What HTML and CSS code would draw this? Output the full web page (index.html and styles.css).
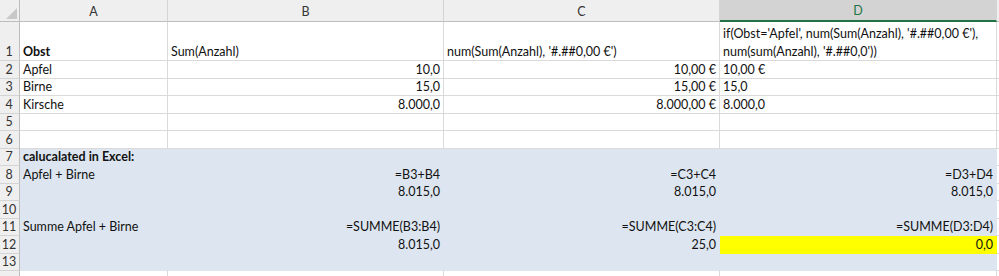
FILE: index.html
```html
<!DOCTYPE html>
<html lang="de">
<head>
<meta charset="utf-8">
<title>Sheet</title>
<link rel="stylesheet" href="styles.css">
</head>
<body>
<div class="sheet">
  <div class="corner"><span class="tri"></span></div>
  <div class="ch">A</div>
  <div class="ch">B</div>
  <div class="ch">C</div>
  <div class="ch sel">D</div>
  <div class="ch last"></div>

  <div class="rh r1">1</div>
  <div class="c r1 bold">Obst</div>
  <div class="c r1">Sum(Anzahl)</div>
  <div class="c r1">num(Sum(Anzahl), '#.##0,00 €')</div>
  <div class="c r1 wrap">if(Obst='Apfel', num(Sum(Anzahl), '#.##0,00 €'),<br>num(sum(Anzahl), '#.##0,0'))</div>
  <div class="c r1 last"></div>

  <div class="rh">2</div>
  <div class="c">Apfel</div>
  <div class="c num">10,0</div>
  <div class="c num">10,00 €</div>
  <div class="c">10,00 €</div>
  <div class="c last"></div>

  <div class="rh">3</div>
  <div class="c">Birne</div>
  <div class="c num">15,0</div>
  <div class="c num">15,00 €</div>
  <div class="c">15,0</div>
  <div class="c last"></div>

  <div class="rh">4</div>
  <div class="c">Kirsche</div>
  <div class="c num">8.000,0</div>
  <div class="c num">8.000,00 €</div>
  <div class="c">8.000,0</div>
  <div class="c last"></div>

  <div class="rh">5</div>
  <div class="c"></div><div class="c"></div><div class="c"></div><div class="c"></div><div class="c last"></div>

  <div class="rh">6</div>
  <div class="c"></div><div class="c"></div><div class="c"></div><div class="c"></div><div class="c last"></div>

  <div class="rh">7</div>
  <div class="c blue bold">calucalated in Excel:</div>
  <div class="c blue"></div><div class="c blue"></div><div class="c blue"></div><div class="c last"></div>

  <div class="rh">8</div>
  <div class="c blue">Apfel + Birne</div>
  <div class="c blue num">=B3+B4</div>
  <div class="c blue num">=C3+C4</div>
  <div class="c blue num">=D3+D4</div>
  <div class="c last"></div>

  <div class="rh">9</div>
  <div class="c blue"></div>
  <div class="c blue num">8.015,0</div>
  <div class="c blue num">8.015,0</div>
  <div class="c blue num">8.015,0</div>
  <div class="c last"></div>

  <div class="rh">10</div>
  <div class="c blue"></div><div class="c blue"></div><div class="c blue"></div><div class="c blue"></div><div class="c last"></div>

  <div class="rh">11</div>
  <div class="c blue">Summe Apfel + Birne</div>
  <div class="c blue num">=SUMME(B3:B4)</div>
  <div class="c blue num">=SUMME(C3:C4)</div>
  <div class="c blue num">=SUMME(D3:D4)</div>
  <div class="c last"></div>

  <div class="rh">12</div>
  <div class="c blue"></div>
  <div class="c blue num">8.015,0</div>
  <div class="c blue num">25,0</div>
  <div class="c yellow num">0,0</div>
  <div class="c last"></div>

  <div class="rh">13</div>
  <div class="c blue"></div><div class="c blue"></div><div class="c blue"></div><div class="c blue"></div><div class="c last"></div>

  <div class="rh"></div>
  <div class="c"></div><div class="c"></div><div class="c"></div><div class="c"></div><div class="c last"></div>
</div>
</body>
</html>
```

FILE: styles.css
```css
* { box-sizing: border-box; }
html, body {
  margin: 0;
  padding: 0;
  background: #ffffff;
  overflow: hidden;
}
.sheet {
  display: grid;
  grid-template-columns: 20px 148px 276px 276px 277px 20px;
  grid-template-rows: 22px 39px repeat(13, 17.5px);
  font-family: Lato, "Open Sans", sans-serif;
  font-size: 12.5px;
  color: #111111;
}
.corner {
  background: #efefef;
  border-right: 1px solid #bdbdbd;
  border-bottom: 1px solid #bdbdbd;
  position: relative;
}
.tri {
  position: absolute;
  right: 2px;
  bottom: 2px;
  width: 0;
  height: 0;
  border-left: 11px solid transparent;
  border-bottom: 11px solid #c8c8c8;
}
.ch {
  background: #efefef;
  border-right: 1px solid #d4d4d4;
  border-bottom: 1px solid #bdbdbd;
  display: flex;
  align-items: center;
  justify-content: center;
  font-size: 12.5px;
  color: #333333;
  padding-top: 1px;
}
.ch.sel {
  background: #d3d3d3;
  color: #217346;
  border-bottom: 2px solid #217346;
}
.rh {
  background: #efefef;
  border-right: 1px solid #bdbdbd;
  border-bottom: 1px solid #d4d4d4;
  display: flex;
  align-items: flex-end;
  justify-content: center;
  font-size: 12.5px;
  color: #333333;
  line-height: 16px;
  padding-right: 1px;
}
.c {
  border-right: 1px solid #dadada;
  border-bottom: 1px solid #dadada;
  padding: 0 3px 0 3px;
  white-space: nowrap;
  display: flex;
  align-items: flex-end;
  line-height: 16px;
}
.wrap {
  display: block;
  padding-top: 3px;
  line-height: 18px;
}
.num { justify-content: flex-end; }
.bold { font-weight: 700; }
.blue {
  background: #dde6f0;
  border-color: #dde6f0;
}
.yellow {
  background: #ffff00;
  border-color: #ffff00;
}
.last { border-right: none; }
```
